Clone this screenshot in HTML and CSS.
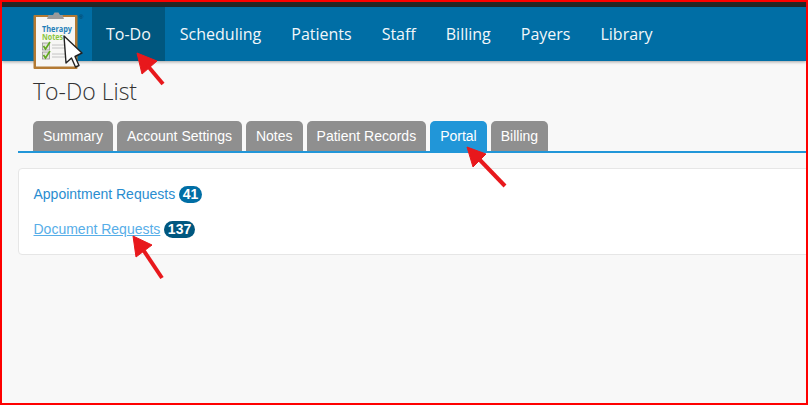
FILE: index.html
```html
<!DOCTYPE html>
<html lang="en">
<head>
<meta charset="utf-8">
<title>To-Do List</title>
<link rel="stylesheet" href="styles.css">
</head>
<body>
<div class="frame">
  <div class="topstrip"></div>
  <nav class="nav">
    <a class="nav-item active">To-Do</a>
    <a class="nav-item">Scheduling</a>
    <a class="nav-item">Patients</a>
    <a class="nav-item">Staff</a>
    <a class="nav-item">Billing</a>
    <a class="nav-item">Payers</a>
    <a class="nav-item">Library</a>
  </nav>
  <main class="content">
    <h1 class="title">To-Do List</h1>
    <div class="tabs">
      <a class="tab">Summary</a>
      <a class="tab">Account Settings</a>
      <a class="tab">Notes</a>
      <a class="tab">Patient Records</a>
      <a class="tab tab-active">Portal</a>
      <a class="tab">Billing</a>
    </div>
    <section class="panel">
      <div class="row"><a class="link">Appointment Requests</a><span class="badge">41</span></div>
      <div class="row"><a class="link link-hover">Document Requests</a><span class="badge badge-dark">137</span></div>
    </section>
  </main>
</div>

<div class="logo">
  <svg width="50" height="58" viewBox="0 0 50 58">
    <rect x="0.5" y="3" width="44" height="54" rx="1" fill="#b37a33"/>
    <rect x="3" y="5" width="39" height="49.5" fill="#f7f7f5"/>
    <path d="M14 7 L15.5 3 H20 L21.5 0.5 H25.5 L27 3 H29.5 L31 7 Z" fill="#9a9a9a"/>
    <text x="9" y="20" textLength="30" lengthAdjust="spacingAndGlyphs" class="logo-t1">Therapy</text>
    <text x="9" y="28" textLength="21" lengthAdjust="spacingAndGlyphs" class="logo-t2">Notes</text>
    <rect x="9.5" y="31" width="7" height="7" fill="#e4e4e0" stroke="#8a8a8a" stroke-width="0.7"/>
    <rect x="9.5" y="40" width="7" height="7" fill="#e4e4e0" stroke="#8a8a8a" stroke-width="0.7"/>
    <path d="M10.5 34 L12.5 37 L17 30 M10.5 43 L12.5 46 L17 39" fill="none" stroke="#5fa81f" stroke-width="1.6"/>
    <path d="M19 33 H33 M19 36 H33 M19 42 H33 M19 45 H33" stroke="#c4c4c4" stroke-width="1"/>
    <path d="M31 24 L33 51 L38.5 46 L42.5 55 L46 53.5 L42 44.5 L49 41 Z" fill="#fff" stroke="#222" stroke-width="1.4" stroke-linejoin="round"/>
  </svg>
  <span class="logo-r">®</span>
</div>

<svg class="arrows" width="808" height="405" viewBox="0 0 808 405">
  <g fill="#e8181c" stroke="#e8181c" stroke-linejoin="round">
    <path d="M137 53 L157 61 L142 74 Z"/>
    <path d="M147 65 L163 84" stroke-width="4" fill="none"/>
    <path d="M467 147 L486 154 L473 167 Z"/>
    <path d="M478 158 L505 186" stroke-width="4" fill="none"/>
    <path d="M133 236 L152 245 L136 257 Z"/>
    <path d="M142 248 L162 278" stroke-width="4" fill="none"/>
  </g>
</svg>
</body>
</html>
```
FILE: styles.css
```css
* { box-sizing: border-box; }
html, body { margin: 0; padding: 0; }
body {
  width: 808px;
  height: 405px;
  overflow: hidden;
  position: relative;
  background: #f8f8f8;
  font-family: "Liberation Sans", Arial, sans-serif;
}
.frame {
  width: 808px;
  height: 405px;
  border: 2px solid #fe0000;
  background: #f8f8f8;
  overflow: hidden;
}
.topstrip { height: 5px; background: #262626; }
.nav {
  height: 54px;
  background: #006ea5;
  box-shadow: 0 1px 3px rgba(0, 0, 0, 0.35);
  display: flex;
  padding-left: 90px;
  font-family: "Open Sans", sans-serif;
  font-size: 16px;
  color: #f2f7fa;
}
.nav-item {
  display: flex;
  align-items: center;
  padding: 0 15px;
}
.active { background: #00577f; padding: 0 14px; }
.content { padding-left: 16px; }
.title {
  margin: 15px 0 0 15px;
  height: 45px;
  font-family: "Open Sans", sans-serif;
  font-weight: 300;
  font-size: 23px;
  line-height: 30px;
  color: #333;
}
.tabs {
  display: flex;
  gap: 4px;
  height: 32px;
  padding-left: 15px;
  border-bottom: 2px solid #2196d8;
}
.tab {
  height: 30px;
  padding: 0 10px;
  display: flex;
  align-items: center;
  background: #8f8f8f;
  border-radius: 5px 5px 0 0;
  color: #fff;
  font-size: 14px;
}
.tab-active { background: #2196d8; }
.panel {
  margin-top: 15px;
  height: 87px;
  margin-right: -10px;
  padding: 8px 14.5px;
  background: #fff;
  border: 1px solid #e6e6e6;
  border-radius: 4px;
  display: flex;
  flex-direction: column;
  gap: 15px;
}
.row {
  height: 20px;
  display: flex;
  align-items: center;
  gap: 3.5px;
  font-size: 14px;
  margin-top: 7px;
}
.row + .row { margin-top: 0; }
.link { color: #2a8dd0; }
.link-hover { color: #57aee8; text-decoration: underline; }
.badge {
  height: 17px;
  padding: 0 4px;
  border-radius: 9px;
  background: #006ea5;
  color: #fff;
  font-size: 14px;
  font-weight: 700;
  line-height: 17px;
}
.badge-dark { background: #00577f; }
.logo {
  position: absolute;
  left: 33px;
  top: 12px;
  width: 50px;
  height: 58px;
}
.logo-t1 { font: 700 8.5px "Open Sans", sans-serif; fill: #1f7fb8; }
.logo-t2 { font: 700 8.5px "Open Sans", sans-serif; fill: #8cc63f; }
.logo-r {
  position: absolute;
  left: 46px;
  top: 1px;
  font-size: 6px;
  line-height: 8px;
  color: #0a3c5a;
}
.arrows { position: absolute; left: 0; top: 0; pointer-events: none; }
```
